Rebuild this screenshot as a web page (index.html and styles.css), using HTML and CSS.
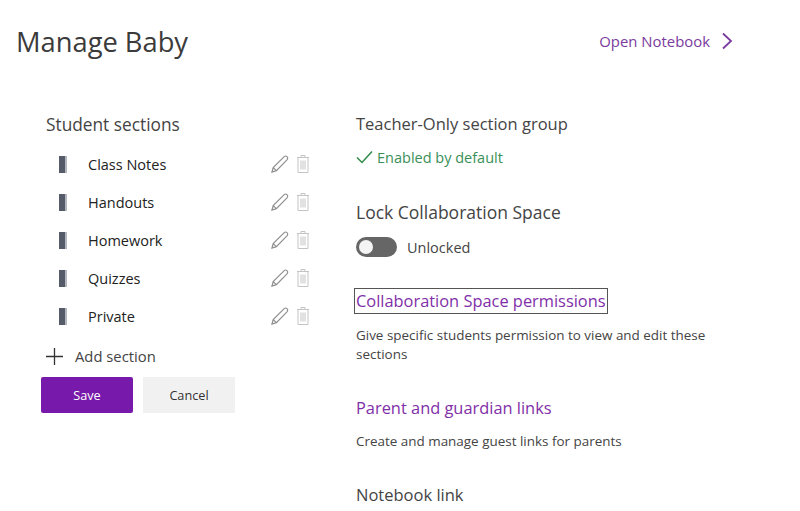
FILE: index.html
```html
<!DOCTYPE html>
<html lang="en">
<head>
    <meta charset="UTF-8">
    <meta name="viewport" content="width=device-width, initial-scale=1.0">
    <title>Manage Baby</title>
    <link rel="stylesheet" href="styles.css">
</head>
<body>

<header class="page-header">
    <h1>Manage Baby</h1>
    <a class="open-link" href="#">
        Open Notebook
        <svg width="14" height="18" viewBox="0 0 14 18"><path d="M3 1.5 L11 9 L3 16.5" fill="none" stroke="#7a3b9e" stroke-width="1.8"/></svg>
    </a>
</header>

<main class="columns">
    <section class="students">
        <h2 class="students-title">Student sections</h2>
        <ul class="section-list">
            <li class="section-row">
                <span class="tab-icon"></span>
                <span class="section-name">Class Notes</span>
                <svg class="row-icon" width="20" height="20" viewBox="0 0 20 20"><path d="M2 18 L3.2 13.6 L14.2 2.6 Q15.6 1.4 17 2.6 Q18.4 4 17.2 5.6 L6.4 16.6 Z M3.2 13.6 L6.4 16.6" fill="none" stroke="#8f8f8f" stroke-width="1.2"/></svg>
                <svg class="row-icon" width="14" height="20" viewBox="0 0 14 20"><path d="M1 3.5 H13 M5 3.5 V1.5 H9 V3.5 M2 3.5 V18.5 H12 V3.5 M5 6.5 V15.5 M7 6.5 V15.5 M9 6.5 V15.5" fill="none" stroke="#c4c4c4" stroke-width="1"/></svg>
            </li>
            <li class="section-row">
                <span class="tab-icon"></span>
                <span class="section-name">Handouts</span>
                <svg class="row-icon" width="20" height="20" viewBox="0 0 20 20"><path d="M2 18 L3.2 13.6 L14.2 2.6 Q15.6 1.4 17 2.6 Q18.4 4 17.2 5.6 L6.4 16.6 Z M3.2 13.6 L6.4 16.6" fill="none" stroke="#8f8f8f" stroke-width="1.2"/></svg>
                <svg class="row-icon" width="14" height="20" viewBox="0 0 14 20"><path d="M1 3.5 H13 M5 3.5 V1.5 H9 V3.5 M2 3.5 V18.5 H12 V3.5 M5 6.5 V15.5 M7 6.5 V15.5 M9 6.5 V15.5" fill="none" stroke="#c4c4c4" stroke-width="1"/></svg>
            </li>
            <li class="section-row">
                <span class="tab-icon"></span>
                <span class="section-name">Homework</span>
                <svg class="row-icon" width="20" height="20" viewBox="0 0 20 20"><path d="M2 18 L3.2 13.6 L14.2 2.6 Q15.6 1.4 17 2.6 Q18.4 4 17.2 5.6 L6.4 16.6 Z M3.2 13.6 L6.4 16.6" fill="none" stroke="#8f8f8f" stroke-width="1.2"/></svg>
                <svg class="row-icon" width="14" height="20" viewBox="0 0 14 20"><path d="M1 3.5 H13 M5 3.5 V1.5 H9 V3.5 M2 3.5 V18.5 H12 V3.5 M5 6.5 V15.5 M7 6.5 V15.5 M9 6.5 V15.5" fill="none" stroke="#c4c4c4" stroke-width="1"/></svg>
            </li>
            <li class="section-row">
                <span class="tab-icon"></span>
                <span class="section-name">Quizzes</span>
                <svg class="row-icon" width="20" height="20" viewBox="0 0 20 20"><path d="M2 18 L3.2 13.6 L14.2 2.6 Q15.6 1.4 17 2.6 Q18.4 4 17.2 5.6 L6.4 16.6 Z M3.2 13.6 L6.4 16.6" fill="none" stroke="#8f8f8f" stroke-width="1.2"/></svg>
                <svg class="row-icon" width="14" height="20" viewBox="0 0 14 20"><path d="M1 3.5 H13 M5 3.5 V1.5 H9 V3.5 M2 3.5 V18.5 H12 V3.5 M5 6.5 V15.5 M7 6.5 V15.5 M9 6.5 V15.5" fill="none" stroke="#c4c4c4" stroke-width="1"/></svg>
            </li>
            <li class="section-row">
                <span class="tab-icon"></span>
                <span class="section-name">Private</span>
                <svg class="row-icon" width="20" height="20" viewBox="0 0 20 20"><path d="M2 18 L3.2 13.6 L14.2 2.6 Q15.6 1.4 17 2.6 Q18.4 4 17.2 5.6 L6.4 16.6 Z M3.2 13.6 L6.4 16.6" fill="none" stroke="#8f8f8f" stroke-width="1.2"/></svg>
                <svg class="row-icon" width="14" height="20" viewBox="0 0 14 20"><path d="M1 3.5 H13 M5 3.5 V1.5 H9 V3.5 M2 3.5 V18.5 H12 V3.5 M5 6.5 V15.5 M7 6.5 V15.5 M9 6.5 V15.5" fill="none" stroke="#c4c4c4" stroke-width="1"/></svg>
            </li>
        </ul>
        <div class="add-section">
            <svg width="17" height="17" viewBox="0 0 17 17"><path d="M8.5 0 V17 M0 8.5 H17" stroke="#333" stroke-width="1.3"/></svg>
            <span>Add section</span>
        </div>
        <div class="buttons">
            <button class="btn btn-save" type="button">Save</button>
            <button class="btn btn-cancel" type="button">Cancel</button>
        </div>
    </section>

    <section class="options">
        <h2 class="option-title">Teacher-Only section group</h2>
        <div class="enabled">
            <svg width="17" height="14" viewBox="0 0 17 14"><path d="M1 7.5 L6 12.5 L16 1.5" fill="none" stroke="#2e8b47" stroke-width="1.5"/></svg>
            <span>Enabled by default</span>
        </div>

        <h2 class="option-title lock-title">Lock Collaboration Space</h2>
        <div class="toggle-row">
            <span class="toggle"></span>
            <span>Unlocked</span>
        </div>

        <a class="purple-link focused" href="#">Collaboration Space permissions</a>
        <p class="option-text">Give specific students permission to view and edit these sections</p>

        <a class="purple-link parent-link" href="#">Parent and guardian links</a>
        <p class="option-text">Create and manage guest links for parents</p>

        <h2 class="option-title notebook-title">Notebook link</h2>
    </section>
</main>

</body>
</html>
```

FILE: styles.css
```css
* {
    box-sizing: border-box;
}

body {
    margin: 0;
    height: 511px;
    overflow: hidden;
    background-color: #fff;
    color: #333;
    font-family: "Open Sans", "Noto Sans", sans-serif;
}

h1, h2, p, ul {
    margin: 0;
    padding: 0;
}

a {
    text-decoration: none;
}

.page-header {
    display: flex;
    justify-content: space-between;
    align-items: center;
    height: 82px;
    padding: 0 66px 0 16px;
}

.page-header h1 {
    font-size: 27.3px;
    font-weight: 400;
    color: #3b3b3b;
}

.open-link {
    display: flex;
    align-items: center;
    gap: 10px;
    font-size: 14.9px;
    color: #7a3b9e;
}

.columns {
    display: flex;
    padding: 30px 0 0 41px;
}

.students {
    width: 315px;
}

.students-title {
    height: 24px;
    margin-top: 1px;
    margin-left: 5px;
    font-size: 17.3px;
    font-weight: 400;
    line-height: 24px;
    color: #444;
}

.section-list {
    list-style: none;
    margin-top: 8px;
    margin-left: 5px;
}

.section-row {
    display: flex;
    align-items: center;
    height: 38px;
}

.tab-icon {
    width: 8px;
    height: 17px;
    margin-left: 13px;
    background-color: #555b68;
    border-right: 2px solid #b4b7bd;
}

.section-name {
    width: 182px;
    margin-left: 21px;
    padding-top: 1px;
    font-size: 14.5px;
    color: #222;
}

.row-icon {
    margin-right: 6px;
}

.add-section {
    display: flex;
    align-items: center;
    gap: 12px;
    height: 24px;
    margin-top: 9px;
    margin-left: 5px;
    font-size: 14.8px;
    color: #444;
}

.buttons {
    display: flex;
    gap: 10px;
    margin-top: 9px;
}

.btn {
    width: 92px;
    height: 36px;
    border: none;
    font-family: inherit;
    font-size: 12.7px;
}

.btn-save {
    background-color: #7719aa;
    border-radius: 2px;
    color: #fff;
}

.btn-cancel {
    background-color: #f1f1f1;
    color: #333;
}

.options {
    width: 370px;
}

.option-title {
    font-size: 16.5px;
    font-weight: 400;
    line-height: 24px;
    color: #444;
}

.enabled {
    display: flex;
    align-items: center;
    gap: 4px;
    height: 24px;
    margin-top: 9px;
    font-size: 14.5px;
    color: #3a9058;
}

.lock-title {
    margin-top: 31px;
    font-size: 17.5px;
}

.toggle-row {
    display: flex;
    align-items: center;
    gap: 10px;
    height: 20px;
    margin-top: 13px;
    font-size: 14.5px;
    color: #444;
}

.toggle {
    position: relative;
    width: 41px;
    height: 20px;
    border-radius: 10px;
    background-color: #666;
}

.toggle::after {
    content: "";
    position: absolute;
    top: 3px;
    left: 3px;
    width: 14px;
    height: 14px;
    border-radius: 50%;
    background-color: #f4f4f4;
}

.purple-link {
    display: block;
    font-size: 16.4px;
    line-height: 24px;
    color: #7f2fa8;
}

.focused {
    width: 254px;
    height: 26px;
    margin-top: 31px;
    margin-left: -2px;
    padding-left: 1px;
    border: 1px solid #555;
    white-space: nowrap;
}

.option-text {
    margin-top: 12px;
    font-size: 13.45px;
    line-height: 19px;
    color: #444;
}

.parent-link {
    margin-top: 32px;
}

.notebook-title {
    margin-top: 32px;
}
```
